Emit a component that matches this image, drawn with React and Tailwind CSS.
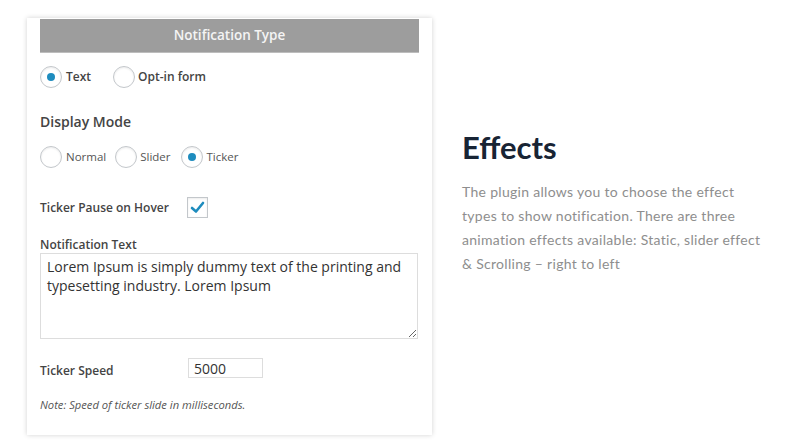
import React from "react";

function Radio({ checked }) {
  return (
    <span className="flex h-[22px] w-[22px] shrink-0 items-center justify-center rounded-full border border-[#c3c7cb] bg-white shadow-[inset_0_1px_2px_rgba(0,0,0,0.08)]">
      {checked && <span className="h-[8px] w-[8px] rounded-full bg-[#1e8cbe]" />}
    </span>
  );
}

export default function App() {
  return (
    <div className="flex h-[447px] w-[800px] bg-white font-['Open_Sans',sans-serif] text-[#444]">
      <div className="ml-[27px] mt-[18px] h-[417px] w-[405px] shrink-0 bg-white px-[13px] shadow-[0_0_5px_rgba(0,0,0,0.18)]">
        <div className="mt-[1px] flex h-[34px] items-center justify-center border-b border-[#bdbdbd] bg-[#9d9d9d] text-[13.5px] font-semibold text-[#f4f4f4]">
          Notification Type
        </div>

        <div className="mt-[13px] flex h-[22px] items-center text-[12px] font-semibold text-[#444]">
          <Radio checked />
          <span className="ml-[4px]">Text</span>
          <span className="ml-[22px]">
            <Radio />
          </span>
          <span className="ml-[3px]">Opt-in form</span>
        </div>

        <div className="mt-[24px] h-[20px] text-[14px] font-semibold leading-[20px] text-[#444]">
          Display Mode
        </div>

        <div className="mt-[14px] flex h-[22px] items-center text-[11.5px] text-[#555]">
          <Radio />
          <span className="ml-[4px]">Normal</span>
          <span className="ml-[9px]">
            <Radio />
          </span>
          <span className="ml-[3px]">Slider</span>
          <span className="ml-[10px]">
            <Radio checked />
          </span>
          <span className="ml-[4px]">Ticker</span>
        </div>

        <div className="mt-[29px] flex h-[21px] items-center text-[12px] font-semibold text-[#444]">
          <span className="w-[147px]">Ticker Pause on Hover</span>
          <span className="flex h-[21px] w-[21px] items-center justify-center border border-[#c3c7cb] bg-white shadow-[inset_0_1px_2px_rgba(0,0,0,0.08)]">
            <svg width="15" height="13" viewBox="0 0 15 13">
              <path d="M2 7 L6 10.5 L13 2" fill="none" stroke="#1e8cbe" strokeWidth="2.6" strokeLinecap="round" strokeLinejoin="round" />
            </svg>
          </span>
        </div>

        <div className="mt-[19px] h-[16px] text-[12px] font-semibold leading-[16px] text-[#444]">
          Notification Text
        </div>
        <textarea
          readOnly
          defaultValue="Lorem Ipsum is simply dummy text of the printing and typesetting industry. Lorem Ipsum"
          className="block h-[86px] w-[378px] border border-[#dddddd] px-[6px] pt-[3px] text-[14px] leading-[19px] text-[#333] outline-none"
        />

        <div className="mt-[19px] flex h-[20px] items-start text-[12px] font-semibold text-[#444]">
          <span className="mt-[5px] w-[148px] leading-[16px]">Ticker Speed</span>
          <span className="flex h-[20px] w-[75px] items-center border border-[#dddddd] bg-white px-[5px] text-[14px] font-normal text-[#333]">
            5000
          </span>
        </div>

        <div className="mt-[19px] h-[16px] text-[11.2px] italic leading-[16px] text-[#555]">
          Note: Speed of ticker slide in milliseconds.
        </div>
      </div>

      <div className="ml-[30px] pt-[129px] font-['Lato',sans-serif]">
        <div className="h-[36px] text-[31px] font-bold leading-[36px] text-[#182434]">
          Effects
        </div>
        <p className="mt-[15px] whitespace-nowrap text-[14px] leading-[24px] tracking-[0.3px] text-[#8e8e8e]">
          The plugin allows you to choose the effect
          <br />
          types to show notification. There are three
          <br />
          animation effects available: Static, slider effect
          <br />
          &amp; Scrolling – right to left
        </p>
      </div>
    </div>
  );
}
